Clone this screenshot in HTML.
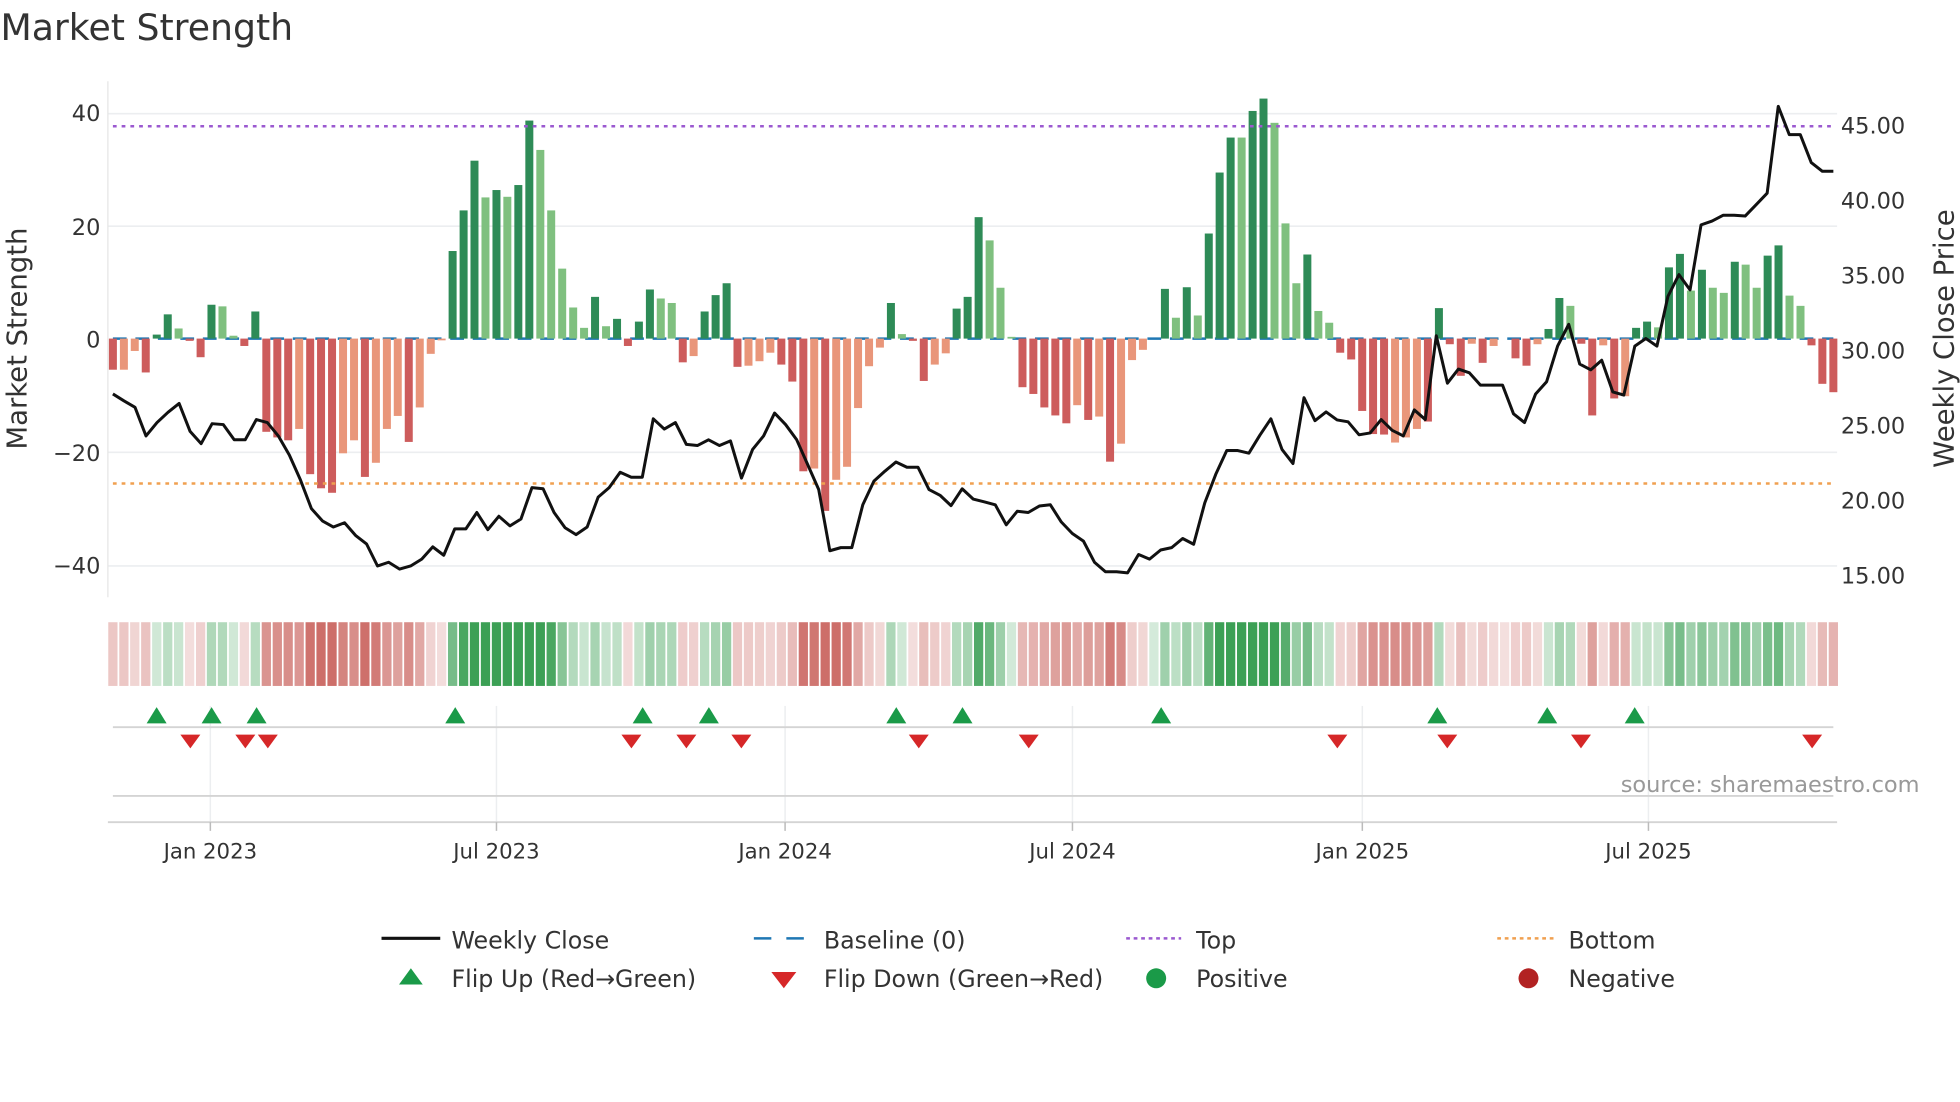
<!DOCTYPE html>
<html><head><meta charset="utf-8"><style>
html,body{margin:0;padding:0;background:#fff;width:1960px;height:1102px;overflow:hidden}
svg{display:block}
text{font-family:"DejaVu Sans","Liberation Sans",sans-serif;fill:#333}
</style></head><body>
<svg id="s" width="1960" height="1102" viewBox="0 0 1568 882" xmlns="http://www.w3.org/2000/svg">
<text x="0" y="32" font-size="29">Market Strength</text>
<g id="grid" stroke="#eceef0" stroke-width="1.3">
<line x1="86" x2="1470" y1="91" y2="91"/><line x1="86" x2="1470" y1="181" y2="181"/>
<line x1="86" x2="1470" y1="362" y2="362"/><line x1="86" x2="1470" y1="453" y2="453"/>
</g>
<line x1="86" x2="86" y1="65" y2="478" stroke="#e6e6e6" stroke-width="1"/>
<g font-size="18" text-anchor="end">
<text x="80" y="97">40</text><text x="80" y="188">20</text><text x="80" y="278">0</text>
<text x="80" y="369">−20</text><text x="80" y="459">−40</text>
</g>
<g font-size="18">
<text x="1473" y="107">45.00</text><text x="1473" y="167">40.00</text><text x="1473" y="227">35.00</text>
<text x="1473" y="287">30.00</text><text x="1473" y="347">25.00</text><text x="1473" y="407">20.00</text>
<text x="1473" y="467">15.00</text>
</g>
<text transform="translate(21,271) rotate(-90)" font-size="22" text-anchor="middle">Market Strength</text>
<text transform="translate(1563,271) rotate(-90)" font-size="22" text-anchor="middle">Weekly Close Price</text>
<line x1="90" x2="1467" y1="271" y2="271" stroke="#1f77b4" stroke-width="2" stroke-dasharray="11,7"/>
<g id="bars"></g>
<line x1="90" x2="1467" y1="101" y2="101" stroke="#9b59d0" stroke-width="2" stroke-dasharray="3,4"/>
<line x1="90" x2="1467" y1="387" y2="387" stroke="#f0a050" stroke-width="2" stroke-dasharray="3,4"/>
<polyline id="price" fill="none" stroke="#111" stroke-width="2.4" stroke-linejoin="round"/>
<g id="heat"></g>
<g stroke="#eceef0" stroke-width="1.2">
<line x1="168" x2="168" y1="565" y2="658"/><line x1="397" x2="397" y1="565" y2="658"/>
<line x1="628" x2="628" y1="565" y2="658"/><line x1="858" x2="858" y1="565" y2="658"/>
<line x1="1090" x2="1090" y1="565" y2="658"/><line x1="1319" x2="1319" y1="565" y2="658"/>
</g>
<line x1="90" x2="1467" y1="582" y2="582" stroke="#d4d4d4" stroke-width="1.5"/>
<line x1="90" x2="1467" y1="637" y2="637" stroke="#d4d4d4" stroke-width="1.5"/>
<line x1="86" x2="1470" y1="658" y2="658" stroke="#d4d4d4" stroke-width="1.5"/>
<g stroke="#bbb" stroke-width="1.2">
<line x1="168" x2="168" y1="658" y2="665"/><line x1="397" x2="397" y1="658" y2="665"/>
<line x1="628" x2="628" y1="658" y2="665"/><line x1="858" x2="858" y1="658" y2="665"/>
<line x1="1090" x2="1090" y1="658" y2="665"/><line x1="1319" x2="1319" y1="658" y2="665"/>
</g>
<g id="marks"></g>
<text x="1536" y="634" font-size="18" text-anchor="end" style="fill:#999">source: sharemaestro.com</text>
<g font-size="17" text-anchor="middle">
<text x="168" y="687">Jan 2023</text><text x="397" y="687">Jul 2023</text><text x="628" y="687">Jan 2024</text>
<text x="858" y="687">Jul 2024</text><text x="1090" y="687">Jan 2025</text><text x="1319" y="687">Jul 2025</text>
</g>
<g font-size="19">
<line x1="305" x2="352" y1="751" y2="751" stroke="#111" stroke-width="2.5"/><text x="361" y="759">Weekly Close</text>
<line x1="603" x2="646" y1="751" y2="751" stroke="#1f77b4" stroke-width="2" stroke-dasharray="14,12"/><text x="659" y="759">Baseline (0)</text>
<line x1="901" x2="945" y1="751" y2="751" stroke="#9b59d0" stroke-width="2" stroke-dasharray="3,3"/><text x="957" y="759">Top</text>
<line x1="1198" x2="1243" y1="751" y2="751" stroke="#f0a050" stroke-width="2" stroke-dasharray="3,3"/><text x="1255" y="759">Bottom</text>
<polygon points="319,788 338,788 328.5,775" fill="#1a9a48"/><text x="361" y="790">Flip Up (Red→Green)</text>
<polygon points="617,778 637,778 627,791" fill="#d62728"/><text x="659" y="790">Flip Down (Green→Red)</text>
<circle cx="925" cy="783" r="8" fill="#1a9a48"/><text x="957" y="790">Positive</text>
<circle cx="1223" cy="783" r="8" fill="#b22222"/><text x="1255" y="790">Negative</text>
</g>
</svg>
<script>
var B="R-5.5 r-5.5 r-2.2 R-6 G0.7 G4.3 g1.8 R-0.4 R-3.3 G6 g5.7 g0.5 R-1.3 G4.8 R-16.5 R-17.5 R-18 r-16 R-24 R-26.5 R-27.3 r-20.3 r-18 R-24.5 r-22 r-16 r-13.7 R-18.3 r-12.2 r-2.7 r-0.3 G15.5 G22.7 G31.5 g25 G26.3 g25.1 G27.2 G38.6 g33.4 g22.7 g12.4 g5.5 g1.9 G7.4 g2.2 G3.5 R-1.3 G3 G8.7 g7.1 g6.3 R-4.2 r-3.1 G4.8 G7.7 G9.8 R-5 r-4.8 r-4 r-2.5 R-4.6 R-7.6 R-23.5 r-23 R-30.5 r-25 r-22.7 r-12.3 r-4.9 r-1.6 G6.3 g0.8 R-0.4 R-7.5 r-4.6 r-2.6 G5.3 G7.4 G21.5 g17.4 g9 g0.3 R-8.6 R-9.8 R-12.2 R-13.6 R-15 r-11.8 R-14.4 r-13.8 R-21.8 r-18.6 r-3.8 r-2 G0 G8.8 g3.7 G9.1 g4.1 G18.6 G29.4 G35.6 g35.6 G40.3 G42.5 g38.2 g20.4 g9.8 G14.9 g4.9 g2.8 R-2.5 R-3.7 R-12.8 R-16.9 R-17 r-18.4 r-17.5 r-16 R-14.7 G5.4 R-1 R-6.6 r-0.9 R-4.3 r-1.3 R0 R-3.5 R-4.8 r-1 G1.7 G7.2 g5.8 R-0.9 R-13.6 r-1.2 R-10.6 r-10.2 G1.9 G3 g2 G12.6 G15 g8.5 G12.2 g9 g8.1 G13.6 g13.1 g9 G14.7 G16.5 g7.6 g5.8 R-1.2 R-8 R-9.5".split(" ");
var P=[1030,1048,1065,1140,1105,1078,1055,1128,1160,1108,1110,1150,1150,1097,1105,1140,1190,1255,1330,1362,1378,1367,1400,1422,1480,1470,1488,1480,1462,1430,1452,1383,1383,1340,1385,1350,1375,1357,1275,1278,1340,1380,1398,1378,1300,1275,1235,1248,1248,1095,1122,1105,1162,1165,1150,1165,1153,1250,1175,1140,1080,1110,1150,1215,1280,1440,1432,1432,1320,1258,1232,1208,1222,1222,1280,1295,1322,1278,1305,
1312,1320,1372,1337,1340,1323,1320,1365,1395,1415,1470,1495,1495,1498,1450,1462,1438,1432,1408,1423,1315,1240,1178,1178,1185,1138,1095,1175,1212,1040,1100,1077,1098,1103,1137,1132,1097,1125,1140,1072,1097,878,1002,965,975,1007,1007,1007,1082,1105,1030,998,905,848,952,967,942,1025,1033,905,885,905,775,718,758,588,578,563,563,565,535,505,278,352,352,425,448,448];
var N=B.length,step=(1467-90)/(N-1),pstep=(1467-90)/(P.length-1),ns="http://www.w3.org/2000/svg";
var col={G:"#2e8b57",g:"#7fc07f",R:"#cd5c5c",r:"#e9967a"};
var bars=document.getElementById("bars"),heat=document.getElementById("heat"),h="",hh="",pts=[];
for(var i=0;i<N;i++){var t=B[i][0],v=parseFloat(B[i].slice(1)),x=90+i*step;
 var y0=271,y1=271-v*4.52;
 if(Math.abs(v)>0.05)h+='<rect x="'+(x-3.2).toFixed(1)+'" y="'+Math.min(y0,y1).toFixed(1)+'" width="6.4" height="'+Math.abs(y1-y0).toFixed(1)+'" fill="'+col[t]+'"/>';
 var a=Math.min(1,0.22+Math.abs(v)/32);
 var c=(v>0||t=="G"||t=="g")?"rgba(60,160,85,"+a.toFixed(2)+")":"rgba(205,110,105,"+a.toFixed(2)+")";
 hh+='<rect x="'+(x-4.4+0.7).toFixed(1)+'" y="498" width="'+(step-1.4).toFixed(1)+'" height="51" fill="'+c+'"/>';}
for(var j=0;j<P.length;j++){pts.push((90+j*pstep).toFixed(1)+","+(P[j]/3.267).toFixed(1));}
bars.innerHTML=h;heat.innerHTML=hh;
document.getElementById("price").setAttribute("points",pts.join(" "));
var up=[125,169,205,364,514,567,717,770,929,1150,1238,1308],dn=[152,196,214,505,549,593,735,823,1070,1158,1265,1450],m="";
up.forEach(function(x){m+='<polygon points="'+(x-8)+',579 '+(x+8)+',579 '+x+',566" fill="#1a9a48"/>';});
dn.forEach(function(x){m+='<polygon points="'+(x-8)+',588 '+(x+8)+',588 '+x+',599" fill="#d62728"/>';});
document.getElementById("marks").innerHTML=m;
</script>
</body></html>
